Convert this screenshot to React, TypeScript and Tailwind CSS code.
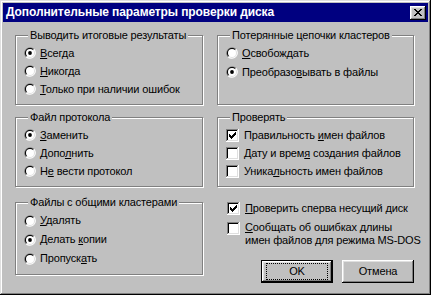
import React from "react";

const Radio = ({ checked }: { checked?: boolean }) => (
  <svg width="12" height="12" viewBox="0 0 12 12" className="shrink-0">
    <path d="M10.24 1.76 A6 6 0 0 0 1.76 10.24 Z" fill="#808080" />
    <path d="M10.24 1.76 A6 6 0 0 1 1.76 10.24 Z" fill="#ffffff" />
    <path d="M9.54 2.46 A5 5 0 0 0 2.46 9.54 Z" fill="#000000" />
    <path d="M9.54 2.46 A5 5 0 0 1 2.46 9.54 Z" fill="#dfdfdf" />
    <circle cx="6" cy="6" r="4" fill="#ffffff" />
    {checked && <circle cx="6" cy="6" r="1.9" fill="#000000" />}
  </svg>
);

const checkCols = [5, 6, 7, 6, 5, 4, 3];

const Check = ({ checked }: { checked?: boolean }) => (
  <svg width="13" height="13" viewBox="0 0 13 13" className="shrink-0" shapeRendering="crispEdges">
    <rect x="0" y="0" width="13" height="13" fill="#ffffff" />
    <rect x="0" y="0" width="12" height="1" fill="#808080" />
    <rect x="0" y="0" width="1" height="12" fill="#808080" />
    <rect x="1" y="1" width="10" height="1" fill="#000000" />
    <rect x="1" y="1" width="1" height="10" fill="#000000" />
    <rect x="1" y="11" width="11" height="1" fill="#dfdfdf" />
    <rect x="11" y="1" width="1" height="11" fill="#dfdfdf" />
    {checked &&
      checkCols.map((y, i) => (
        <rect key={i} x={3 + i} y={y} width="1" height="3" fill="#000000" />
      ))}
  </svg>
);

const closeRows = [
  "##....##",
  ".##..##.",
  "..####..",
  "...##...",
  "..####..",
  ".##..##.",
  "##....##",
];

const CloseGlyph = () => (
  <svg width="8" height="7" viewBox="0 0 8 7" shapeRendering="crispEdges">
    {closeRows.map((row, y) =>
      row.split("").map((c, x) =>
        c === "#" ? <rect key={`${x}-${y}`} x={x} y={y} width="1" height="1" fill="#000" /> : null
      )
    )}
  </svg>
);

const RadioRow = ({ checked, children, h = "h-[18px]" }: { checked?: boolean; children: React.ReactNode; h?: string }) => (
  <div className={`flex items-center ${h}`}>
    <Radio checked={checked} />
    <span className="ml-[4px] whitespace-nowrap">{children}</span>
  </div>
);

const CheckRow = ({ checked, children }: { checked?: boolean; children: React.ReactNode }) => (
  <div className="flex items-center h-[18px]">
    <Check checked={checked} />
    <span className="ml-[5px] whitespace-nowrap">{children}</span>
  </div>
);

const Group = ({
  title,
  children,
  className = "",
}: {
  title: string;
  children: React.ReactNode;
  className?: string;
}) => (
  <fieldset
    className={`border border-[#808080] shadow-[inset_1px_1px_0_#ffffff,1px_1px_0_#ffffff] pl-[8px] pt-[2px] pb-[6px] ${className}`}
  >
    <legend className="ml-[4px] px-[2px] leading-[13px] bg-[#c0c0c0] whitespace-nowrap">{title}</legend>
    {children}
  </fieldset>
);

const btnBevel =
  "shadow-[inset_-1px_-1px_0_#000000,inset_1px_1px_0_#ffffff,inset_-2px_-2px_0_#808080,inset_2px_2px_0_#dfdfdf]";

export default function App() {
  return (
    <div className="w-[431px] h-[295px] bg-[#c0c0c0] p-[3px] shadow-[inset_-1px_-1px_0_#000000,inset_1px_1px_0_#dfdfdf,inset_-2px_-2px_0_#808080,inset_2px_2px_0_#ffffff] font-['Liberation_Sans',Arial,sans-serif] text-[11px] leading-[13px] tracking-[-0.15px] text-black overflow-hidden">
      <div className="h-[19px] bg-[#000080] flex items-center pl-[3px] pr-[2px]">
        <span className="text-white font-bold text-[12px] leading-[15px] tracking-[-0.1px] flex-1 whitespace-nowrap">
          Дополнительные параметры проверки диска
        </span>
        <div className={`w-[16px] h-[14px] bg-[#c0c0c0] flex items-center justify-center ${btnBevel}`}>
          <CloseGlyph />
        </div>
      </div>

      <div className="pl-[12px] pt-[7px] grid grid-cols-[188px_197px] gap-x-[14px] gap-y-[6px]">
        <Group title="Выводить итоговые результаты">
          <RadioRow checked>
            <u>В</u>сегда
          </RadioRow>
          <RadioRow>
            <u>Н</u>икогда
          </RadioRow>
          <RadioRow>
            <u>Т</u>олько при наличии ошибок
          </RadioRow>
        </Group>

        <Group title="Потерянные цепочки кластеров">
          <RadioRow>
            <u>О</u>свобождать
          </RadioRow>
          <RadioRow h="h-[20px]" checked>
            Преобразо<u>в</u>ывать в файлы
          </RadioRow>
        </Group>

        <Group title="Файл протокола">
          <RadioRow checked>
            <u>З</u>аменить
          </RadioRow>
          <RadioRow>
            Допо<u>л</u>нить
          </RadioRow>
          <RadioRow>
            Н<u>е</u> вести протокол
          </RadioRow>
        </Group>

        <Group title="Проверять">
          <CheckRow checked>
            Правильность <u>и</u>мен файлов
          </CheckRow>
          <CheckRow>
            Дату и врем<u>я</u> создания файлов
          </CheckRow>
          <CheckRow>
            Уника<u>л</u>ьность имен файлов
          </CheckRow>
        </Group>

        <Group title="Файлы с общими кластерами" className="self-start mt-[3px] pb-[5px]">
          <RadioRow h="h-[19px]">
            <u>У</u>далять
          </RadioRow>
          <RadioRow h="h-[19px]" checked>
            Делать <u>к</u>опии
          </RadioRow>
          <RadioRow h="h-[19px]">
            Пропуск<u>а</u>ть
          </RadioRow>
        </Group>

        <div className="mt-[3px] pt-[3px] pl-[10px] flex flex-col">
          <CheckRow checked>
            <u>П</u>роверить сперва несущий диск
          </CheckRow>
          <div className="flex items-start mt-[4px]">
            <div className="mt-[1px]">
              <Check />
            </div>
            <span className="ml-[5px] whitespace-nowrap">
              <u>С</u>ообщать об ошибках длины
              <br />
              имен файлов для режима MS-DOS
            </span>
          </div>
          <div className="flex justify-end gap-[9px] mt-[13px]">
            <div className="w-[72px] h-[23px] border border-black">
              <div className={`w-full h-full flex items-center justify-center ${btnBevel}`}>
                <span className="outline outline-1 outline-dotted outline-black w-[60px] h-[15px] flex items-center justify-center">
                  OK
                </span>
              </div>
            </div>
            <div className={`w-[72px] h-[23px] flex items-center justify-center ${btnBevel}`}>
              Отмена
            </div>
          </div>
        </div>
      </div>
    </div>
  );
}
